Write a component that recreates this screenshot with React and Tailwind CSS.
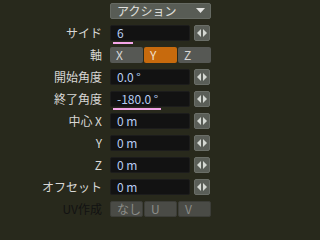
import React from "react";

const font = { fontFamily: '"Noto Sans CJK JP", "DejaVu Sans", sans-serif' };

const Spin = () => (
  <div className="w-4 h-4 shrink-0 rounded-[2px] bg-[#5a5e57] border border-[#6a6e67] flex items-center justify-center">
    <svg width="10" height="8" viewBox="0 0 10 8">
      <polygon points="4,0 4,8 0,4" fill="#d4d8d2" />
      <polygon points="6,0 6,8 10,4" fill="#d4d8d2" />
    </svg>
  </div>
);

const Field = ({ value, bar }) => (
  <div className="flex items-center gap-1 w-[100px]">
    <div className="relative w-[80px] h-4 bg-[#121212] border border-[#1c1c1c] rounded-[2px] flex items-center pl-[6px] text-[12px] text-[#b8cdf2] leading-none">
      {value}
      {bar && (
        <div
          className="absolute left-[2px] top-[16px] h-[2px] bg-[#f4a6e9]"
          style={{ width: bar }}
        />
      )}
    </div>
    <Spin />
  </div>
);

const Seg = ({ items, active, disabled }) => (
  <div className="flex gap-[1px] w-[101px] h-4">
    {items.map((it, i) => (
      <div
        key={it}
        className={
          "flex-1 rounded-[2px] flex items-center pl-[6px] text-[12px] leading-none " +
          (i === active
            ? "bg-[#c76a0d] text-[#f2e0cc]"
            : disabled
            ? "bg-[#4a4b46] text-[#8c8d88] border border-[#3c3d38]"
            : "bg-[#565854] text-[#d6d6d4]")
        }
      >
        {it}
      </div>
    ))}
  </div>
);

const Row = ({ label, dim, children }) => (
  <div className="flex items-center h-4">
    <div
      className={
        "w-[102px] text-right text-[12px] leading-none whitespace-nowrap " +
        (dim ? "text-[#121212]" : "text-[#d8d8d6]")
      }
    >
      {label}
    </div>
    <div className="ml-[8px]">{children}</div>
  </div>
);

export default function App() {
  const rows = [
    { label: "開始角度", value: "0.0 °" },
    { label: "終了角度", value: "-180.0 °", bar: 48 },
    { label: "中心 X", value: "0 m" },
    { label: "Y", value: "0 m" },
    { label: "Z", value: "0 m" },
    { label: "オフセット", value: "0 m" },
  ];

  return (
    <div className="w-full min-h-screen bg-[#28291c] overflow-hidden pt-[3px] flex flex-col gap-[6px]" style={font}>
      <Row label="">
        <div className="w-[101px] h-4 rounded-[2px] bg-[#585c55] border border-[#666a63] flex items-center justify-between pl-[6px] pr-[5px] text-[12px] text-[#e0e0de] leading-none">
          アクション
          <svg width="9" height="6" viewBox="0 0 9 6">
            <polygon points="0,0 9,0 4.5,5" fill="#e4e4e2" />
          </svg>
        </div>
      </Row>
      <Row label="サイド">
        <Field value="6" bar={20} />
      </Row>
      <Row label="軸">
        <Seg items={["X", "Y", "Z"]} active={1} />
      </Row>
      {rows.map((r) => (
        <Row key={r.label} label={r.label}>
          <Field value={r.value} bar={r.bar} />
        </Row>
      ))}
      <Row label="UV作成" dim>
        <Seg items={["なし", "U", "V"]} active={-1} disabled />
      </Row>
    </div>
  );
}
